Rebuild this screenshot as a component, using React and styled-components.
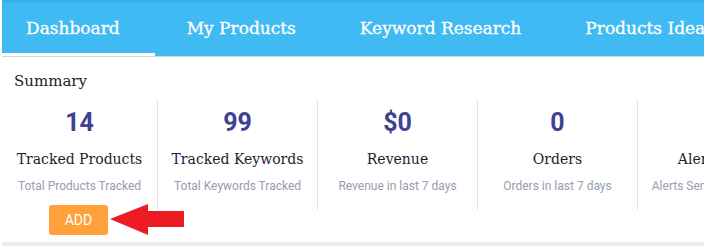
import React from "react";
import styled, { createGlobalStyle } from "styled-components";

const GlobalStyle = createGlobalStyle`
  html, body {
    margin: 0;
    padding: 0;
    background: #ffffff;
  }
  body {
    font-family: Roboto, "Liberation Sans", sans-serif;
    overflow: hidden;
  }
`;

const Page = styled.div`
  width: 702px;
  margin-left: 2px;
`;

const TabBar = styled.nav`
  display: flex;
  height: 56px;
  background: #3fbaf3;
  box-shadow: inset 0 2px 2px rgba(0, 0, 0, 0.08);
  border-bottom: 1px solid #d2d2d2;
  overflow: hidden;
  white-space: nowrap;
`;

const Tab = styled.div`
  display: flex;
  align-items: center;
  flex-shrink: 0;
  padding: 2px 32px 0;
  color: #ffffff;
  font-family: "DejaVu Serif", "Liberation Serif", serif;
  font-size: 17px;
  font-weight: 400;
  -webkit-text-stroke: 0.3px #ffffff;
  border-bottom: 3px solid ${(p) => (p.$active ? "#ffffff" : "transparent")};

  &:first-child {
    padding-left: 24px;
    padding-right: 35px;
  }
`;

const Panel = styled.section`
  padding-top: 14px;
`;

const Title = styled.h2`
  margin: 0 0 0 12px;
  font-family: "DejaVu Serif", "Liberation Serif", serif;
  font-size: 15px;
  font-weight: 400;
  color: #222222;
  line-height: 20px;
`;

const Stats = styled.div`
  display: grid;
  grid-template-columns: 156px repeat(4, 160px);
  margin-top: 9px;
`;

const Stat = styled.div`
  box-sizing: border-box;
  height: 110px;
  border-right: 1px solid #e3e3e3;
  display: flex;
  flex-direction: column;
  align-items: center;
  padding-top: 8px;
  white-space: nowrap;
  overflow: hidden;
`;

const Value = styled.div`
  font-family: Roboto, "Liberation Sans", sans-serif;
  font-weight: 700;
  font-size: 25px;
  line-height: 30px;
  color: #3e4290;
`;

const Label = styled.div`
  margin-top: 11px;
  font-family: "DejaVu Serif", "Liberation Serif", serif;
  font-size: 14px;
  line-height: 20px;
  color: #1d2030;
`;

const Caption = styled.div`
  margin-top: 10px;
  font-family: Roboto, "Liberation Sans", sans-serif;
  font-size: 12px;
  line-height: 14px;
  color: #979cb2;
`;

const ActionRow = styled.div`
  display: flex;
  align-items: center;
  margin-top: -6px;
  margin-left: 47px;
  height: 32px;
`;

const AddButton = styled.button`
  width: 59px;
  height: 30px;
  border: none;
  border-radius: 3px;
  background: #ffa03a;
  color: #ffffff;
  font-family: Roboto, "Liberation Sans", sans-serif;
  font-size: 14px;
  padding: 0;
  cursor: pointer;
`;

const Arrow = styled.svg`
  display: block;
  margin-left: 2px;
`;

const Footer = styled.div`
  margin-top: 6px;
  height: 10px;
  background: #eeeeee;
`;

const tabs = ["Dashboard", "My Products", "Keyword Research", "Products Ideas", "Alerts"];

const stats = [
  { value: "14", label: "Tracked Products", caption: "Total Products Tracked" },
  { value: "99", label: "Tracked Keywords", caption: "Total Keywords Tracked" },
  { value: "$0", label: "Revenue", caption: "Revenue in last 7 days" },
  { value: "0", label: "Orders", caption: "Orders in last 7 days" },
  { value: "0", label: "Alerts Sent", caption: "Alerts Sent in last 7 days" },
];

export default function App() {
  return (
    <>
      <GlobalStyle />
      <Page>
        <TabBar>
          {tabs.map((t, i) => (
            <Tab key={t} $active={i === 0}>
              {t}
            </Tab>
          ))}
        </TabBar>
        <Panel>
          <Title>Summary</Title>
          <Stats>
            {stats.map((s) => (
              <Stat key={s.label}>
                <Value>{s.value}</Value>
                <Label>{s.label}</Label>
                <Caption>{s.caption}</Caption>
              </Stat>
            ))}
          </Stats>
          <ActionRow>
            <AddButton>ADD</AddButton>
            <Arrow width="75" height="32" viewBox="0 0 75 32">
              <polygon
                points="0,15 38,0 38,7 74,7 74,23 38,23 38,31"
                fill="#ed1c24"
              />
            </Arrow>
          </ActionRow>
          <Footer />
        </Panel>
      </Page>
    </>
  );
}
